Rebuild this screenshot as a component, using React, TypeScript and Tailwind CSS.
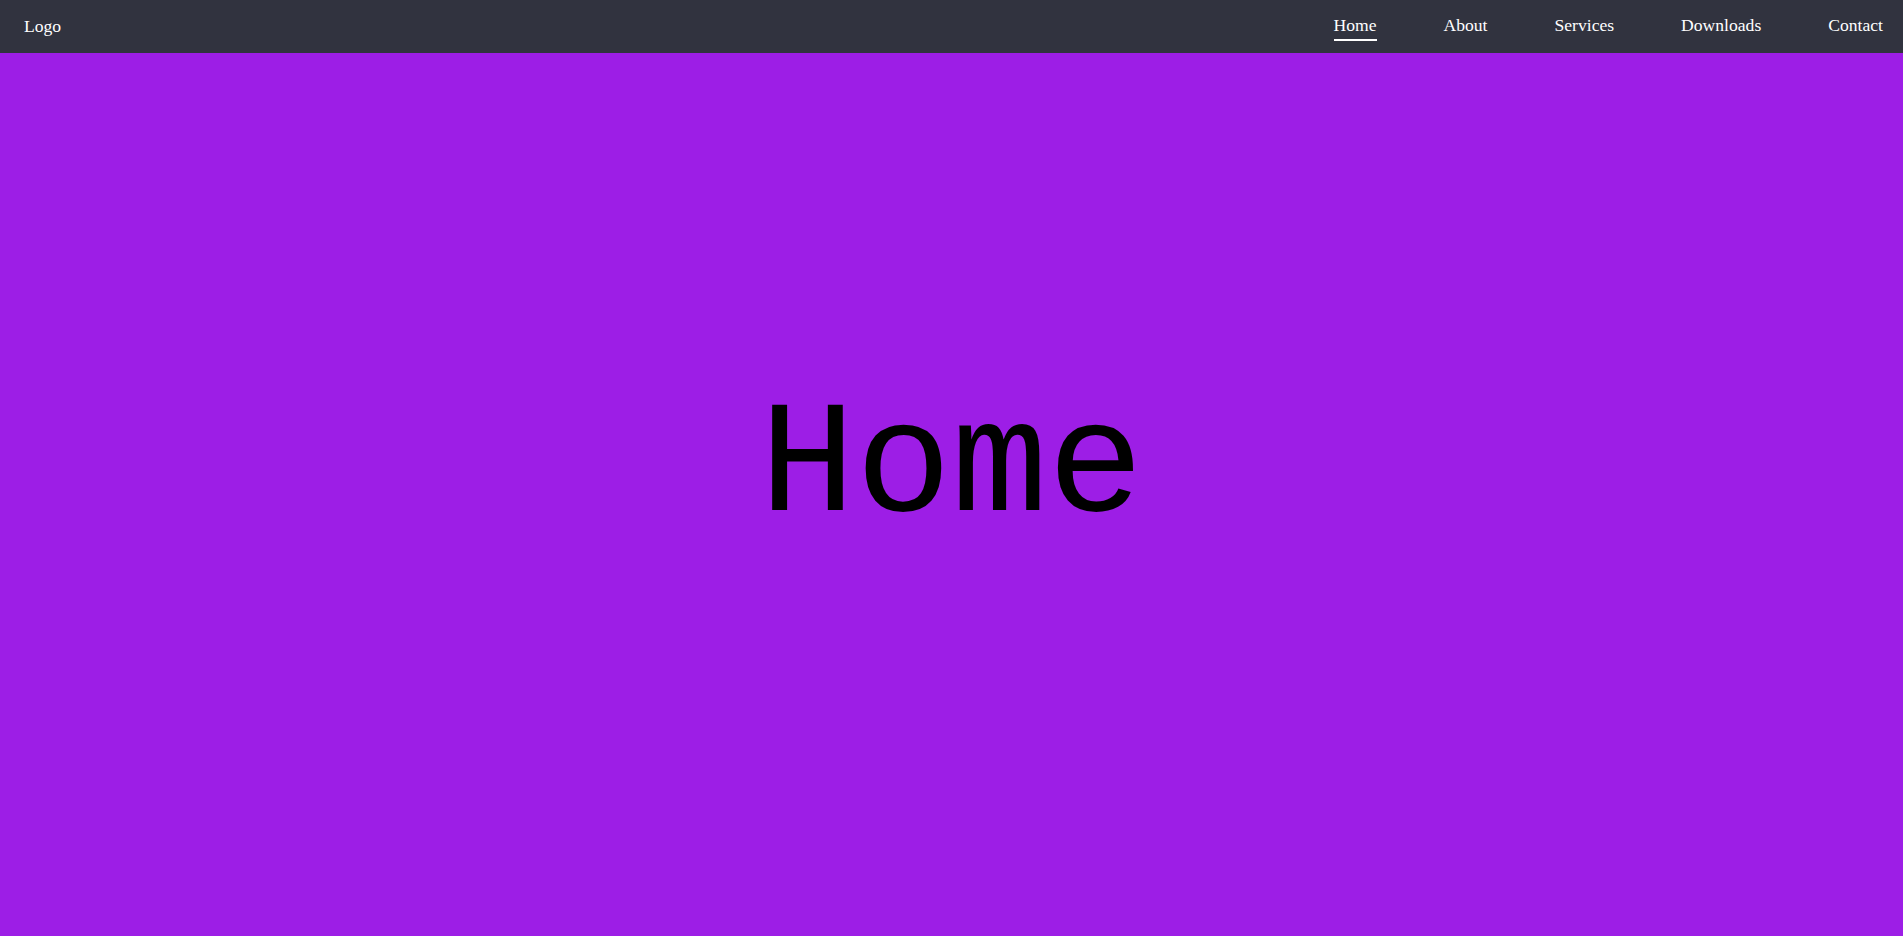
const links = ['Home', 'About', 'Services', 'Downloads', 'Contact'];

const App = () => {
  return (
    <div className="flex h-screen flex-col bg-[#9d1ee6]">
      <nav className="flex h-[53px] shrink-0 items-center justify-between bg-[#31333f] pl-6 pr-5 font-['Liberation_Serif',serif] text-[17.6px] text-white">
        <div>Logo</div>
        <ul className="flex items-center gap-[67px]">
          {links.map((link) => (
            <li key={link}>
              <a
                href="#"
                className={link === 'Home' ? 'block border-b-2 border-white pb-px' : 'block border-b-2 border-transparent pb-px'}
              >
                {link}
              </a>
            </li>
          ))}
        </ul>
      </nav>
      <main className="flex flex-1 items-center justify-center pb-[53px]">
        <h1 className="font-['Courier_New','Nimbus_Mono_PS','Nimbus_Mono_L',FreeMono,'Liberation_Mono',monospace] text-[160px] font-normal leading-normal text-black">
          Home
        </h1>
      </main>
    </div>
  );
};

export default App;
